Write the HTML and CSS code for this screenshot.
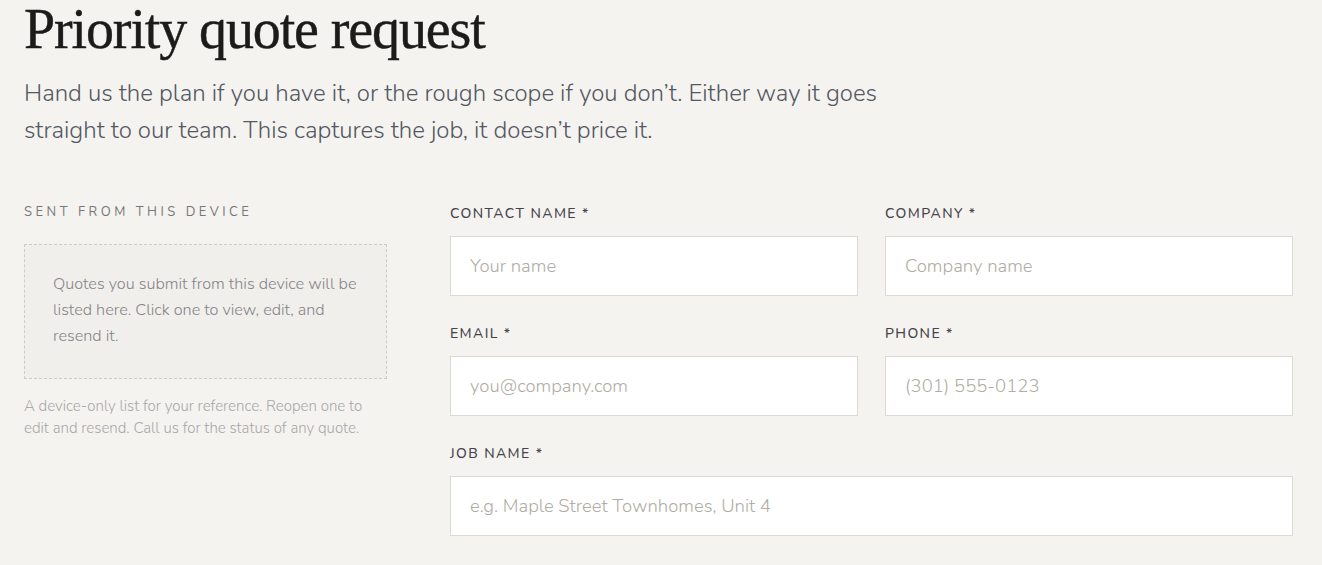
FILE: index.html
```html
<!DOCTYPE html>
<html lang="en">
<head>
    <meta charset="UTF-8">
    <title>Priority quote request</title>
    <link rel="stylesheet" href="styles.css">
</head>
<body>
  <div class="page">
    <h1 class="title">Priority quote request</h1>
    <p class="lead">Hand us the plan if you have it, or the rough scope if you don’t. Either way it goes straight to our team. This captures the job, it doesn’t price it.</p>
    <div class="layout">
      <aside class="side">
        <div class="side-label">Sent from this device</div>
        <div class="empty-box">Quotes you submit from this device will be listed here. Click one to view, edit, and resend it.</div>
        <p class="side-note">A device-only list for your reference. Reopen one to edit and resend. Call us for the status of any quote.</p>
      </aside>
      <form class="form">
        <div class="row">
          <label class="field">
            <span class="field-label">Contact name *</span>
            <input type="text" placeholder="Your name">
          </label>
          <label class="field">
            <span class="field-label">Company *</span>
            <input type="text" placeholder="Company name">
          </label>
        </div>
        <div class="row">
          <label class="field">
            <span class="field-label">Email *</span>
            <input type="email" placeholder="you@company.com">
          </label>
          <label class="field">
            <span class="field-label">Phone *</span>
            <input type="tel" placeholder="(301) 555-0123">
          </label>
        </div>
        <div class="row single">
          <label class="field">
            <span class="field-label">Job name *</span>
            <input type="text" placeholder="e.g. Maple Street Townhomes, Unit 4">
          </label>
        </div>
      </form>
    </div>
  </div>
</body>
</html>
```

FILE: styles.css
```css
* {
  margin: 0;
  padding: 0;
  box-sizing: border-box;
}
body {
  background: #f5f3ef;
  font-family: "Nunito", "Lato", "Noto Sans", sans-serif;
  color: #333;
}
.page {
  padding: 0 29px 0 24px;
}
.title {
  font-family: "Liberation Serif", "DejaVu Serif", serif;
  font-weight: 400;
  font-size: 56px;
  line-height: 1;
  letter-spacing: -0.02em;
  color: #1c1b1a;
  padding-top: 1px;
  -webkit-text-stroke: 0.4px #1c1b1a;
}
.lead {
  max-width: 860px;
  margin-top: 18px;
  font-size: 24px;
  line-height: 37px;
  font-weight: 300;
  color: #535863;
}
.layout {
  display: grid;
  grid-template-columns: 363px 1fr;
  gap: 63px;
  margin-top: 55px;
}
.side-label {
  font-size: 13px;
  letter-spacing: 0.27em;
  text-transform: uppercase;
  color: #77767a;
  line-height: 16px;
}
.empty-box {
  margin-top: 24px;
  padding: 26px 28px 29px;
  border: 1px dashed #cfccc5;
  background: #f1efeb;
  font-size: 16.2px;
  line-height: 26px;
  font-weight: 300;
  color: #85848a;
}
.side-note {
  margin-top: 16px;
  font-size: 15px;
  line-height: 22px;
  font-weight: 300;
  color: #a8a7aa;
}
.form {
  display: flex;
  flex-direction: column;
  gap: 28px;
}
.row {
  display: grid;
  grid-template-columns: 1fr 1fr;
  gap: 27px;
}
.row.single {
  grid-template-columns: 1fr;
}
.field {
  display: flex;
  flex-direction: column;
  gap: 13px;
}
.field-label {
  font-size: 14px;
  line-height: 18px;
  letter-spacing: 0.1em;
  text-transform: uppercase;
  color: #45444c;
  font-weight: 500;
  padding-top: 1px;
}
.field input {
  height: 60px;
  border: 1px solid #dcd9d2;
  background: #fff;
  padding: 0 19px;
  font-family: inherit;
  font-size: 18.5px;
  font-weight: 300;
  color: #333;
  outline: none;
}
.field input::placeholder {
  color: #b1aca4;
}
```
